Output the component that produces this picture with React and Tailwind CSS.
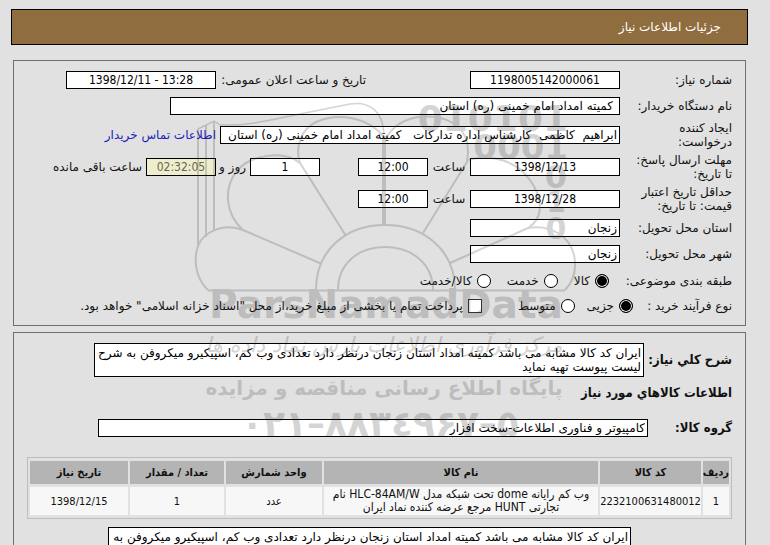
import React, { useState } from 'react';

const boxClass = "h-[18px] border border-black bg-white text-black outline-none";
const numberClass = "text-center font-['DejaVu_Sans_Condensed','DejaVu_Sans',sans-serif]";
const boldClass = "font-['DejaVu_Sans_Condensed','DejaVu_Sans',sans-serif] text-[13px] leading-[14px] font-bold whitespace-nowrap";

// Read only text box, numbers are centered and Persian text is aligned right
const Field = ({ id, label, value, className }) => (
  <input
    id={id}
    type="text"
    aria-label={label}
    value={value}
    readOnly
    className={`${boxClass} ${className}`}
  />
);

const Row = ({ id, label, className, children }) => (
  <div className={`flex items-center ${className}`}>
    <label htmlFor={id} className="w-28 shrink-0 whitespace-nowrap">
      {label}
    </label>
    {children}
  </div>
);

const Radio = ({ name, label, checked, onChange }) => (
  <label className="flex items-center gap-[5px] whitespace-nowrap">
    <input
      type="radio"
      name={name}
      checked={checked}
      onChange={onChange}
      className="size-[14px] appearance-none rounded-full border border-black bg-white checked:bg-black checked:shadow-[inset_0_0_0_1px_white]"
    />
    {label}
  </label>
);

const Watermark = () => (
  <svg
    aria-hidden="true"
    viewBox="190 90 400 360"
    className="pointer-events-none absolute top-[90px] left-[190px] h-[360px] w-[400px] opacity-20"
    fill="none"
    stroke="#303030"
    strokeWidth="2"
  >
    {/* book edge on the left */}
    <path d="M198 129V247M206 125V237M214 121V230" />
    <path d="M198 129L214 121L220 125C250 126 275 119 300 114L350 104C368 101 383 110 384 134" strokeWidth="1.500" />
    {/* flower petals */}
    <path d="M208 290C196 279 193 260 198 246C204 230 226 223 243 230L322 264" />
    <path d="M243 230C226 215 223 190 236 172C250 154 284 150 300 163L346 236" />
    <path d="M300 163C295 148 300 130 316 122C338 112 368 117 384 137" />
    <path d="M384 136V225" strokeWidth="4" />
    <path d="M384 147C386 130 401 120 418 117C442 114 468 123 468 152L467 162L423 233" />
    <path d="M468 160C490 153 517 161 530 180C544 200 543 219 528 228L450 263" />
    <path d="M528 228C551 224 570 237 574 255C577 270 574 281 565 290" />
    <path d="M208 290.500H565" />
    <path d="M316 290C316 250 346 225 385 225C424 225 455 250 455 290M338 290C338 264 358 247 385 247C412 247 433 264 433 290" />
    <g fill="#303030" stroke="none" direction="ltr" fontFamily="'DejaVu Sans', sans-serif" fontWeight="700">
      <text x="568" y="131" fontSize="36" textAnchor="end">010101</text>
      <text x="568" y="159" fontSize="34" textAnchor="end">0001</text>
      <text x="556" y="188" fontSize="32" textAnchor="middle">0</text>
      <text x="556" y="212" fontSize="28" textAnchor="middle">1</text>
      <text x="556" y="239" fontSize="30" textAnchor="middle">0</text>
      <text x="386" y="318" fontSize="39" textAnchor="middle">ParsNamadData</text>
    </g>
    <g fill="#303030" stroke="none" direction="rtl" fontFamily="'DejaVu Sans', sans-serif" textAnchor="middle">
      <text x="384" y="352" fontSize="21" fontStyle="italic">مرکز فرآوری اطلاعات پارس نماد داده ها</text>
      <text x="384" y="395" fontSize="20" fontWeight="700">پایگاه اطلاع رسانی مناقصه و مزایده</text>
    </g>
    <text x="380" y="436" fontSize="36" fill="#303030" stroke="none" fontFamily="'DejaVu Sans', sans-serif" fontWeight="700" textAnchor="middle" direction="ltr">
      &#x202D;۰۲۱–۸۸۳٤۹۶۷–۵&#x202C;
    </text>
  </svg>
);

const headers = ["ردیف", "کد کالا", "نام کالا", "واحد شمارش", "تعداد / مقدار", "تاریخ نیاز"];

const description =
  "ایران کد کالا مشابه می باشد کمیته امداد استان زنجان درنظر دارد تعدادی وب کم، اسپیکیرو میکروفن به شرح لیست پیوست تهیه نماید";

const App = () => {
  const [subject, setSubject] = useState("کالا");
  const [process, setProcess] = useState("جزیی");
  const [treasury, setTreasury] = useState(false);

  return (
    <div
      dir="rtl"
      className="relative min-h-screen bg-[#e1e1e1] pt-[9px] font-['DejaVu_Sans',sans-serif] text-xs leading-[14px] text-[#111]"
    >
      <header className="mr-[22px] ml-[11px] flex h-9 items-center border border-black bg-[#906d3f] px-[26px] text-white">
        <h1>جزئیات اطلاعات نیاز</h1>
      </header>

      <main className="mt-[15px] mr-6 ml-[13px] flex flex-col gap-[6px]">
        <section className="border border-[#6f6f6f] px-[13px] pt-[6px] pb-2">
          <Row id="number" label="شماره نیاز:" className="h-[26px]">
            <Field id="number" value="1198005142000061" className={`w-[150px] ${numberClass}`} />
            <label htmlFor="announce" className="mr-[104px] w-[146px] whitespace-nowrap">
              تاریخ و ساعت اعلان عمومی:
            </label>
            <input
              id="announce"
              dir="ltr"
              value="1398/12/11 - 13:28"
              readOnly
              className={`${boxClass} mr-1 w-[150px] ${numberClass}`}
            />
          </Row>

          <Row id="buyer" label="نام دستگاه خریدار:" className="h-[26px]">
            <Field id="buyer" value="کمیته امداد امام خمینی (ره) استان" className="w-[450px] pr-[6px]" />
          </Row>

          <Row id="creator" label={<>ایجاد کننده<br />درخواست:</>} className="h-8">
            <Field
              id="creator"
              value="ابراهیم  کاظمی  کارشناس اداره تدارکات   کمیته امداد امام خمینی (ره) استان"
              className="w-[400px] px-[2px]"
            />
            <a href="#contact" className="mr-1 whitespace-nowrap text-[#2222bb]">
              اطلاعات تماس خریدار
            </a>
          </Row>

          <Row id="deadline" label={<>مهلت ارسال پاسخ:<br />تا تاریخ:</>} className="h-8">
            <Field id="deadline" value="1398/12/13" className={`w-[150px] ${numberClass}`} />
            <label htmlFor="deadline-time" className="w-[42px] text-center">ساعت</label>
            <Field id="deadline-time" value="12:00" className={`w-[70px] ${numberClass}`} />
            <Field id="days" value="1" className={`mr-[38px] w-[70px] ${numberClass}`} />
            <label htmlFor="days" className="w-[34px] pr-1 whitespace-nowrap">روز و</label>
            <input
              id="remaining"
              value="02:32:05"
              readOnly
              className={`h-[18px] w-[70px] border border-black bg-[#eeeecc] text-[#666655] outline-none ${numberClass}`}
            />
            <label htmlFor="remaining" className="mr-1 whitespace-nowrap">ساعت باقی مانده</label>
          </Row>

          <Row id="validity" label={<>حداقل تاریخ اعتبار<br />قیمت: تا تاریخ:</>} className="h-8">
            <Field id="validity" value="1398/12/28" className={`w-[150px] ${numberClass}`} />
            <label htmlFor="validity-time" className="w-[42px] text-center">ساعت</label>
            <Field id="validity-time" value="12:00" className={`w-[70px] ${numberClass}`} />
          </Row>

          <Row id="province" label="استان محل تحویل:" className="h-[26px]">
            <Field id="province" value="زنجان" className="w-[150px] px-[2px]" />
          </Row>

          <Row id="city" label="شهر محل تحویل:" className="h-[26px]">
            <Field id="city" value="زنجان" className="w-[150px] px-[2px]" />
          </Row>

          {/* Subject */}
          <div role="radiogroup" aria-label="طبقه بندی موضوعی" className="flex h-7 items-center gap-4">
            <span className="w-[107px] whitespace-nowrap">طبقه بندی موضوعی:</span>
            {["کالا", "خدمت", "کالا/خدمت"].map((item) => (
              <Radio
                key={item}
                name="subject"
                label={item}
                checked={subject === item}
                onChange={() => setSubject(item)}
              />
            ))}
          </div>

          {/* Purchase process */}
          <div role="radiogroup" aria-label="نوع فرآیند خرید" className="flex h-[22px] items-center gap-3">
            <span className="w-[87px] whitespace-nowrap">نوع فرآیند خرید :</span>
            {["جزیی", "متوسط"].map((item) => (
              <Radio
                key={item}
                name="process"
                label={item}
                checked={process === item}
                onChange={() => setProcess(item)}
              />
            ))}
            <label className="mr-6 flex items-center gap-[5px] whitespace-nowrap">
              <input
                type="checkbox"
                checked={treasury}
                onChange={(e) => setTreasury(e.target.checked)}
                className="size-[14px] appearance-none border border-[#333] bg-white checked:bg-black"
              />
              پرداخت تمام یا بخشی از مبلغ خرید،از محل "اسناد خزانه اسلامی" خواهد بود.
            </label>
          </div>
        </section>

        <section className="border border-[#6f6f6f] px-[13px] pt-[10px] pb-4">
          <div className="flex items-center">
            <label htmlFor="summary" className={`w-[88px] shrink-0 ${boldClass}`}>
              شرح کلي نیاز:
            </label>
            <textarea
              id="summary"
              rows={2}
              value={description}
              readOnly
              className="h-[34px] w-[550px] resize-none overflow-hidden border border-black bg-white px-[2px] pt-[2px] leading-[14px] text-black outline-none"
            />
          </div>

          <h2 className={`mt-[9px] ${boldClass}`}>اطلاعات کالاهاي مورد نیاز</h2>

          <div className="mt-[19px] flex items-center">
            <label htmlFor="group" className={`w-[84px] shrink-0 ${boldClass}`}>گروه کالا:</label>
            <Field id="group" value="کامپیوتر و فناوری اطلاعات-سخت افزار" className="w-[550px] px-[2px]" />
          </div>

          <div className="mt-5 border border-[#bdbdbd]">
            <table className="w-full table-fixed border-separate border-spacing-x-[2px] border-spacing-y-[3px] text-center font-['DejaVu_Sans_Condensed','DejaVu_Sans',sans-serif] text-[11px] leading-[13px]">
              <colgroup>
                <col className="w-[26px]" />
                <col className="w-[101px]" />
                <col />
                <col className="w-24" />
                <col className="w-[94px]" />
                <col className="w-[98px]" />
              </colgroup>
              <thead>
                <tr className="h-[23px]">
                  {headers.map((header) => (
                    <th key={header} className="bg-[#b4b4b4] p-0 whitespace-nowrap">{header}</th>
                  ))}
                </tr>
              </thead>
              <tbody>
                <tr className="h-7">
                  <td className="bg-[#f7f7f7] p-0">1</td>
                  <td className="bg-[#f7f7f7] p-0">2232100631480012</td>
                  <td className="bg-[#f7f7f7] px-2 py-0 text-xs leading-[13px]">
                    وب کم رایانه dome تحت شبکه مدل HLC-84AM/W نام تجارتی HUNT مرجع عرضه کننده نماد ایران
                  </td>
                  <td className="bg-[#f7f7f7] p-0">عدد</td>
                  <td className="bg-[#f7f7f7] p-0">1</td>
                  <td className="bg-[#f7f7f7] p-0">1398/12/15</td>
                </tr>
              </tbody>
            </table>
          </div>

          <textarea
            aria-label="شرح کالا"
            rows={2}
            value={description}
            readOnly
            className="mt-2 mr-[101px] block h-[34px] w-[523px] resize-none overflow-hidden border border-black bg-white px-[2px] pt-[2px] leading-[14px] text-black outline-none"
          />
        </section>
      </main>

      <Watermark />
    </div>
  );
};

export default App;
